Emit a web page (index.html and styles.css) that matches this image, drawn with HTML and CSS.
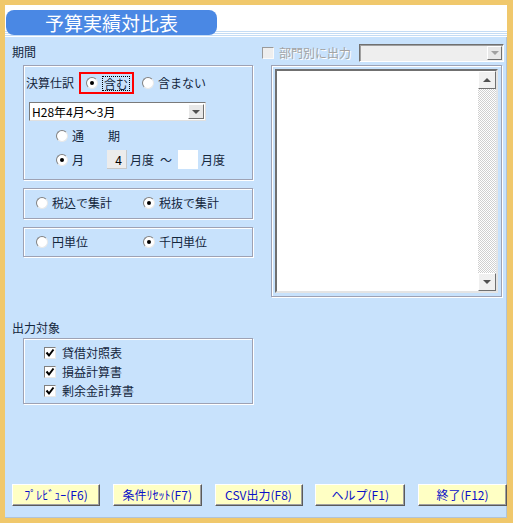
FILE: index.html
```html
<!DOCTYPE html>
<html>
<head>
    <title>予算実績対比表</title>
    <link rel="stylesheet" href="styles.css">
</head>
<body>
<div class="frame">
  <div class="win">
    <div class="header"><div class="title">予算実績対比表</div></div>

    <div class="main">
      <div class="left">
        <div class="sec-label">期間</div>
        <div class="group period">
          <div class="row settle">
            <span class="lbl">決算仕訳</span>
            <span class="focus-box"><span class="radio on"></span><span class="focus-text">含む</span></span>
            <span class="radio"></span><span class="opt-text">含まない</span>
          </div>
          <div class="select">
            <span class="select-val">H28年4月～3月</span>
            <span class="drop-btn"><span class="tri"></span></span>
          </div>
          <div class="row term">
            <span class="radio"></span><span class="opt-text">通</span><span class="ki">期</span>
          </div>
          <div class="row month">
            <span class="radio on"></span><span class="opt-text">月</span>
            <span class="num gray">4</span><span class="unit">月度</span>
            <span class="tilde">～</span>
            <span class="num white"></span><span class="unit">月度</span>
          </div>
        </div>

        <div class="group pair tax">
          <span class="opt"><span class="radio"></span><span class="opt-text">税込で集計</span></span>
          <span class="opt"><span class="radio on"></span><span class="opt-text">税抜で集計</span></span>
        </div>

        <div class="group pair unitsel">
          <span class="opt"><span class="radio"></span><span class="opt-text">円単位</span></span>
          <span class="opt"><span class="radio on"></span><span class="opt-text">千円単位</span></span>
        </div>

        <div class="sec-label out-label">出力対象</div>
        <div class="group targets">
          <div class="check-row"><span class="check"><svg width="10" height="10" viewBox="0 0 10 10"><path d="M1.5 4.5 L4 7.5 L8.5 1.5" fill="none" stroke="#000" stroke-width="2"/></svg></span><span class="opt-text">貸借対照表</span></div>
          <div class="check-row"><span class="check"><svg width="10" height="10" viewBox="0 0 10 10"><path d="M1.5 4.5 L4 7.5 L8.5 1.5" fill="none" stroke="#000" stroke-width="2"/></svg></span><span class="opt-text">損益計算書</span></div>
          <div class="check-row"><span class="check"><svg width="10" height="10" viewBox="0 0 10 10"><path d="M1.5 4.5 L4 7.5 L8.5 1.5" fill="none" stroke="#000" stroke-width="2"/></svg></span><span class="opt-text">剰余金計算書</span></div>
        </div>
      </div>

      <div class="right">
        <div class="dept-row">
          <span class="check disabled"></span>
          <span class="dis-text">部門別に出力</span>
          <span class="dis-select"><span class="drop-btn"><span class="tri light"></span></span></span>
        </div>
        <div class="list-frame">
          <div class="listbox">
            <div class="list-body"></div>
            <div class="scrollbar">
              <span class="sb-btn"><span class="tri up"></span></span>
              <span class="sb-track"></span>
              <span class="sb-btn"><span class="tri"></span></span>
            </div>
          </div>
        </div>
      </div>
    </div>

    <div class="buttons">
      <button class="btn b1">ﾌﾟﾚﾋﾞｭｰ(F6)</button>
      <button class="btn b2">条件ﾘｾｯﾄ(F7)</button>
      <button class="btn b3">CSV出力(F8)</button>
      <button class="btn b4">ヘルプ(F1)</button>
      <button class="btn b5">終了(F12)</button>
    </div>
  </div>
</div>
</body>
</html>
```

FILE: styles.css
```css
* { box-sizing: border-box; }
body { margin: 0; font-family: "Noto Sans CJK JP", "Liberation Sans", sans-serif; font-size: 12px; color: #14263c; }
.frame { width: 513px; height: 523px; background: #f0c86c; padding: 5px 6px 5px 5px; }
.win { width: 502px; height: 513px; background: #c8e2fc; display: flex; flex-direction: column; box-shadow: inset -1px -1px #b0c4d8; }

.header { height: 32px; flex: none; padding: 5px 0 0 1px;
  background: linear-gradient(to bottom, #fff 0 26px, #c4dcf4 26px 27px, #fff 27px 28px, #c4dcf4 28px 29px, #fff 29px 30px, #c4dcf4 30px 31px, #fff 31px 32px); }
.title { width: 211px; height: 25px; background: #4a88e4; border-radius: 8px; color: #fff; font-size: 19px; line-height: 25px; text-align: center; }

.main { flex: 1; display: flex; }
.left { width: 253px; flex: none; }
.right { flex: 1; }

.sec-label { margin: 8px 0 0 7px; height: 14px; line-height: 14px; }
.out-label { margin-top: 64px; }

.group { margin-left: 18px; width: 230px; border: 1px solid #9ea2b4; box-shadow: inset 1px 1px #fff, 1px 1px #fff; }
.period { margin-top: 6px; height: 115px; padding: 6px 0 0 0; }

.row { display: flex; align-items: center; }
.settle { height: 22px; padding-left: 2px; }
.lbl { line-height: 14px; }
.focus-box { display: flex; align-items: center; height: 22px; margin-left: 5px; width: 55px; border: 2px solid #ff0000; padding-left: 5px; }
.focus-text { margin-left: 5px; outline: 1px dotted #000; line-height: 13px; padding: 0 1px; }
.settle > .radio { margin-left: 8px; }
.opt-text { margin-left: 4px; line-height: 14px; }

.radio { width: 12px; height: 12px; border-radius: 50%; background: #fff; flex: none; border: 1px solid; border-color: #808080 #e8e8e8 #e8e8e8 #808080; position: relative; }
.radio.on::after { content: ""; position: absolute; left: 3px; top: 3px; width: 4px; height: 4px; border-radius: 50%; background: #000; }

.select { display: flex; margin: 8px 0 0 5px; width: 177px; height: 19px; background: #fff; border: 1px solid; border-color: #7a7a7a #e0e0e0 #e0e0e0 #7a7a7a; padding: 1px; }
.select-val { flex: 1; line-height: 15px; padding-left: 1px; color: #000; }
.drop-btn { width: 16px; background: #e8e8e8; border: 1px solid; border-color: #fff #707070 #707070 #fff; display: flex; align-items: center; justify-content: center; }
.tri { width: 0; height: 0; border-left: 4px solid transparent; border-right: 4px solid transparent; border-top: 4px solid #505050; }
.tri.up { border-top: none; border-bottom: 4px solid #505050; }
.tri.light { border-top-color: #a0a0a0; }

.term { margin-top: 8px; height: 14px; padding-left: 32px; }
.ki { margin-left: 24px; line-height: 14px; }
.month { margin-top: 7px; height: 19px; padding-left: 32px; }
.num { width: 20px; height: 19px; line-height: 19px; text-align: right; padding-right: 5px; color: #000; }
.num.gray { margin-left: 23px; background: #ececec; box-shadow: inset -1px -1px #c8c8c8; }
.num.white { background: #fff; margin-left: 6px; }
.unit { margin-left: 3px; line-height: 14px; }
.tilde { margin-left: 6px; line-height: 14px; }

.pair { display: flex; align-items: center; padding-left: 12px; padding-bottom: 1px; }
.tax { margin-top: 8px; height: 31px; }
.unitsel { margin-top: 8px; height: 30px; }
.opt { display: flex; align-items: center; width: 107px; }

.targets { margin-top: 3px; height: 66px; padding: 4px 0 0 20px; }
.check-row { display: flex; align-items: center; height: 19px; }
.check { width: 12px; height: 12px; background: #fff; border: 1px solid; border-color: #808080 #e8e8e8 #e8e8e8 #808080; display: flex; align-items: center; justify-content: center; flex: none; }
.check-row .opt-text { margin-left: 6px; }

.dept-row { display: flex; align-items: center; margin-top: 7px; height: 18px; padding-left: 4px; }
.check.disabled { background: #eeeeee; border-color: #9a9a9a #fafafa #fafafa #9a9a9a; }
.dis-text { margin-left: 5px; color: #a4a4a4; text-shadow: 1px 1px #fff; line-height: 14px; }
.dis-select { display: flex; justify-content: flex-end; margin-left: 8px; width: 145px; height: 18px; background: #eeeeee; border: 1px solid; border-color: #707070 #fff #fff #707070; box-shadow: inset 1px 1px #a0a0a0; padding: 1px; }
.dis-select .drop-btn { width: 15px; }

.list-frame { margin: 3px 0 0 13px; width: 231px; height: 232px; border: 1px solid #9ea2b4; box-shadow: inset 1px 1px #fff, 1px 1px #fff; padding: 3px; }
.listbox { display: flex; height: 100%; background: #fff; border: 2px solid; border-color: #707070 #e4e4e4 #e4e4e4 #707070; }
.list-body { flex: 1; }
.scrollbar { width: 18px; display: flex; flex-direction: column; }
.sb-btn { height: 18px; background: #f0f0f0; border: 1px solid; border-color: #fff #707070 #707070 #fff; display: flex; align-items: center; justify-content: center; flex: none; }
.sb-track { flex: 1; background: repeating-conic-gradient(#d0d0d0 0 25%, #fff 0 50%) 0 0 / 2px 2px; }

.buttons { flex: none; height: 34px; display: flex; justify-content: space-between; padding: 0 0 12px 7px; }
.btn { height: 22px; padding: 0; background: #ffffc4; color: #0a10c8; font-family: "Noto Sans CJK JP", sans-serif; font-size: 12px; line-height: 18px; border: 1px solid; border-color: #fff #5a5a5a #5a5a5a #fff; box-shadow: inset -1px -1px #a0a0a0; }
.b1 { width: 88px; }
.b2 { width: 89px; }
.b3 { width: 88px; }
.b4 { width: 90px; }
.b5 { width: 89px; }
```
